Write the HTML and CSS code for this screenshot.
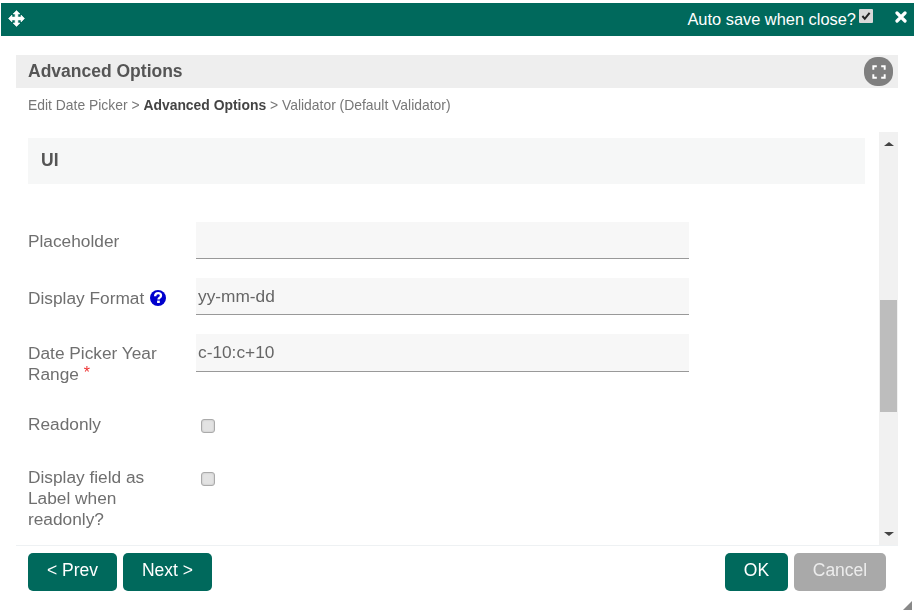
FILE: index.html
```html
<!DOCTYPE html>
<html lang="en">
<head>
<meta charset="utf-8">
<title>Advanced Options</title>
<link rel="stylesheet" href="styles.css">
</head>
<body>
<div class="window">
  <header class="titlebar">
    <svg class="move-icon" viewBox="0 0 16 16" width="17" height="17" aria-hidden="true"><path fill="#fff" stroke="#fff" stroke-width=".6" stroke-linejoin="round" d="M8 .5 11.200 3.700 9.300 3.700 9.300 6.700 12.300 6.700 12.300 4.800 15.500 8 12.300 11.200 12.300 9.300 9.300 9.300 9.300 12.300 11.200 12.300 8 15.500 4.800 12.300 6.700 12.300 6.700 9.300 3.700 9.300 3.700 11.200 .5 8 3.700 4.800 3.700 6.700 6.700 6.700 6.700 3.700 4.800 3.700Z"/></svg>
    <div class="titlebar-right">
      <span class="autosave">Auto save when close?</span>
      <span class="autosave-check"><svg viewBox="0 0 14 14" width="14" height="14" aria-hidden="true"><rect width="14" height="14" rx="1" fill="#d9d9d9"/><path d="M3.400 7 5.800 9.800 10.600 3.800" fill="none" stroke="#222" stroke-width="2"/></svg></span>
      <svg class="close-icon" viewBox="0 0 12 12" width="12" height="12" aria-hidden="true"><path d="M2 2 10 10M10 2 2 10" stroke="#fff" stroke-width="3.200" stroke-linecap="round"/></svg>
    </div>
  </header>

  <div class="panel">
    <div class="panel-head">
      <h1 class="panel-title">Advanced Options</h1>
      <button class="fullscreen" type="button" aria-label="Full screen">
        <svg viewBox="0 0 16 16" width="14" height="14" aria-hidden="true"><path d="M1.500 5.500V1.500H5.500M10.500 1.500H14.500V5.500M14.500 10.500V14.500H10.500M5.500 14.500H1.500V10.500" fill="none" stroke="#fff" stroke-width="2.200"/></svg>
      </button>
    </div>
    <nav class="crumbs">Edit Date Picker &gt; <b>Advanced Options</b> &gt; Validator (Default Validator)</nav>

    <div class="scroller">
      <div class="content">
        <h2 class="section">UI</h2>
        <div class="row">
          <label class="label">Placeholder</label>
          <div class="field"></div>
        </div>
        <div class="row row-format">
          <label class="label">Display Format <svg class="help" viewBox="0 0 16 16" width="16" height="16" aria-hidden="true"><circle cx="8" cy="8" r="8" fill="#0000cd"/><path d="M5.100 6.200C5.200 4.300 6.400 3.200 8.100 3.200 9.800 3.200 11 4.300 11 5.700 11 7.600 8.500 7.600 8.500 9.400" fill="none" stroke="#fff" stroke-width="2.300"/><rect x="7.100" y="10.600" width="2.700" height="2.400" fill="#fff"/></svg></label>
          <div class="field">yy-mm-dd</div>
        </div>
        <div class="row row-range">
          <label class="label">Date Picker Year Range <span class="req">*</span></label>
          <div class="field">c-10:c+10</div>
        </div>
        <div class="row row-check">
          <label class="label">Readonly</label>
          <span class="check"></span>
        </div>
        <div class="row row-check">
          <label class="label">Display field as Label when readonly?</label>
          <span class="check"></span>
        </div>
      </div>
      <div class="scrollbar">
        <span class="arrow arrow-up"></span>
        <span class="thumb"></span>
        <span class="arrow arrow-down"></span>
      </div>
    </div>

    <footer class="footer">
      <div class="btn-group">
        <button class="btn" type="button">&lt; Prev</button>
        <button class="btn" type="button">Next &gt;</button>
      </div>
      <div class="btn-group">
        <button class="btn btn-ok" type="button">OK</button>
        <button class="btn btn-cancel" type="button">Cancel</button>
      </div>
    </footer>
  </div>
  <span class="grip"></span>
</div>
</body>
</html>
```
FILE: styles.css
```css
* { box-sizing: border-box; }
html, body { margin: 0; padding: 0; background: #fff; }
body { font-family: "Liberation Sans", Arial, sans-serif; color: #666; width: 916px; height: 615px; overflow: hidden; }

.window { position: relative; height: 615px; padding-top: 3px; filter: blur(.35px); }

.titlebar {
  height: 33px;
  margin: 0 2px 0 1px;
  background: #00695c;
  color: #fff;
  display: flex;
  align-items: center;
  justify-content: space-between;
  padding: 0 7px;
}
.move-icon { margin-top: -3px; }
.titlebar-right { display: flex; align-items: center; margin-top: -1px; }
.autosave { font-size: 16.400px; }
.autosave-check { display: flex; margin: -6px 0 0 3px; }
.close-icon { margin: -5px 0 0 22px; }

.panel { margin: 19px 18px 0 16px; }
.panel-head {
  height: 33px;
  background: #eee;
  display: flex;
  align-items: center;
  justify-content: space-between;
  padding: 0 5px 0 12px;
}
.panel-title { margin: 0; font-size: 17.500px; font-weight: bold; color: #555; }
.fullscreen {
  width: 29px; height: 29px; border: 0; padding: 0;
  border-radius: 46%;
  background: #7f7f7f;
  display: flex; align-items: center; justify-content: center;
}
.crumbs { font-size: 13.900px; line-height: 16px; color: #777; padding: 9px 0 0 12px; height: 44px; }
.crumbs b { color: #444; }

.scroller { display: flex; height: 413px; overflow: hidden; }
.content { flex: 1; min-width: 0; padding: 6px 14px 0 12px; }
.section {
  margin: 0 0 38px;
  height: 46px;
  line-height: 45px;
  background: #f6f7f7;
  padding-left: 13px;
  font-size: 17.500px;
  font-weight: bold;
  color: #555;
}
.row { display: flex; align-items: flex-start; margin-bottom: 19px; }
.label { width: 168px; flex: none; padding-right: 20px; font-size: 17.300px; line-height: 21px; padding-top: 9px; color: #6f6f6f; }
.row-format .label { padding-top: 10px; }
.help { vertical-align: -2px; margin-left: 1px; }
.req { color: #e33; font-size: 16px; line-height: 0; vertical-align: 2px; }
.field {
  width: 493px;
  height: 37px;
  background: #f7f7f7;
  border-bottom: 1px solid #999;
  font-size: 17.300px;
  line-height: 36px;
  padding-left: 2px;
  color: #666;
}
.row-range { margin-bottom: 29px; }
.row-range .field { height: 38px; }
.row-check { margin-bottom: 0; min-height: 53px; }
.row-check .label { padding-top: 0; }
.row-check + .row-check { min-height: 0; }
.check {
  width: 14px; height: 14px; margin: 5px 0 0 5px;
  background: #e3e3e3;
  border: 1px solid #aaa;
  border-radius: 3px;
  box-shadow: inset 0 0 2px #bbb;
}

.scrollbar {
  width: 19px; flex: none;
  background: #f1f1f1;
  display: flex; flex-direction: column; align-items: center;
}
.arrow { width: 0; height: 0; border-left: 5px solid transparent; border-right: 5px solid transparent; }
.arrow-up { border-bottom: 4px solid #444; margin-top: 10px; }
.arrow-down { border-top: 4px solid #444; margin-top: 120px; }
.thumb { width: 17px; height: 112px; background: #bdbdbd; margin-top: 154px; }

.footer {
  border-top: 1px solid #eef1f3;
  padding: 7px 12px 0;
  display: flex;
  justify-content: space-between;
}
.btn-group { display: flex; gap: 6px; }
.btn {
  width: 89px; height: 38px;
  border: 0; border-radius: 5px;
  background: #00695c; color: #fff;
  font: 17.500px "Liberation Sans", Arial, sans-serif;
  padding: 0 0 3px;
}
.btn-ok { width: 63px; }
.btn-cancel { width: 92px; background: #a9a9a9; color: #ececec; }

.grip {
  position: absolute; right: 4px; bottom: 5px;
  width: 0; height: 0;
  border-left: 9px solid transparent;
  border-bottom: 9px solid #888;
}
```
